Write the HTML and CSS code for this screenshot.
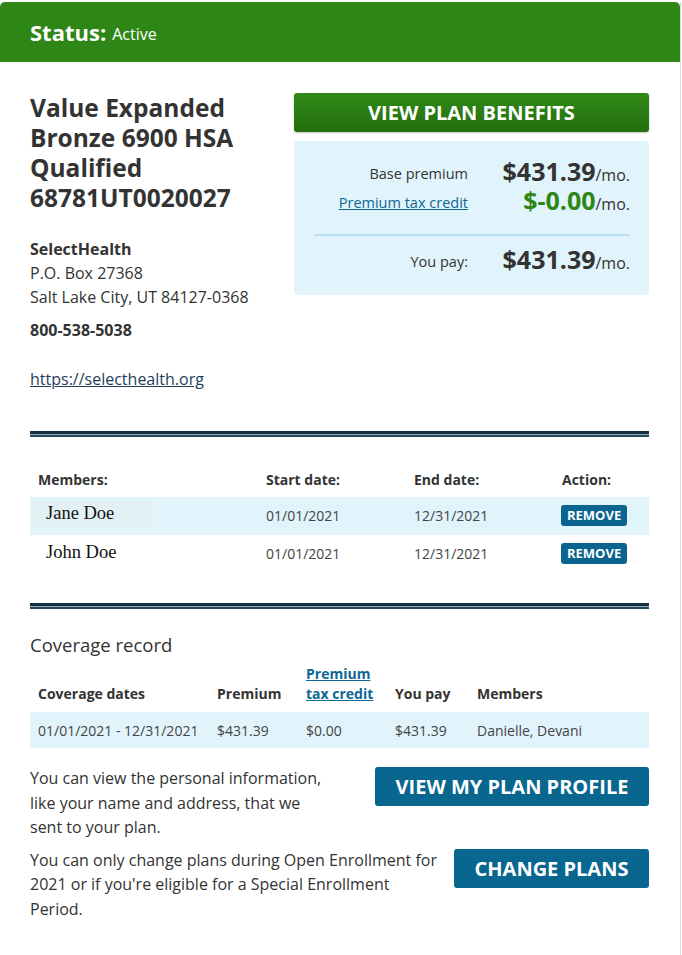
FILE: index.html
```html
<!DOCTYPE html>
<html lang="en">
<head>
<meta charset="utf-8">
<title>Plan status</title>
<link rel="stylesheet" href="styles.css">
</head>
<body>
<div class="card">
  <div class="status-bar"><span class="status-label">Status:</span> <span class="status-value">Active</span></div>
  <div class="content">
    <div class="top">
      <div class="plan-info">
        <h1 class="plan-name">Value Expanded Bronze 6900 HSA Qualified 68781UT0020027</h1>
        <div class="issuer">
          <div class="issuer-name">SelectHealth</div>
          <div>P.O. Box 27368</div>
          <div>Salt Lake City, UT 84127-0368</div>
          <div class="issuer-phone">800-538-5038</div>
          <a class="issuer-link" href="#">https://selecthealth.org</a>
        </div>
      </div>
      <div class="plan-costs">
        <a class="btn btn-green" href="#">VIEW PLAN BENEFITS</a>
        <div class="cost-box">
          <div class="cost-row">
            <span class="cost-label">Base premium</span>
            <span class="cost-value"><b>$431.39</b>/mo.</span>
          </div>
          <div class="cost-row">
            <a class="cost-label link" href="#">Premium tax credit</a>
            <span class="cost-value"><b class="green">$-0.00</b>/mo.</span>
          </div>
          <div class="cost-sep"></div>
          <div class="cost-row">
            <span class="cost-label">You pay:</span>
            <span class="cost-value"><b>$431.39</b>/mo.</span>
          </div>
        </div>
      </div>
    </div>

    <div class="rule"></div>

    <div class="members">
      <div class="m-row m-head">
        <div class="c1">Members:</div>
        <div class="c2">Start date:</div>
        <div class="c3">End date:</div>
        <div class="c4">Action:</div>
      </div>
      <div class="m-row shade">
        <div class="c1"><span class="name name-hl">Jane Doe</span></div>
        <div class="c2">01/01/2021</div>
        <div class="c3">12/31/2021</div>
        <div class="c4"><a class="remove" href="#">REMOVE</a></div>
      </div>
      <div class="m-row">
        <div class="c1"><span class="name">John Doe</span></div>
        <div class="c2">01/01/2021</div>
        <div class="c3">12/31/2021</div>
        <div class="c4"><a class="remove" href="#">REMOVE</a></div>
      </div>
    </div>

    <div class="rule rule-2"></div>

    <h2 class="cov-title">Coverage record</h2>
    <div class="cov">
      <div class="cov-row cov-head">
        <div class="k1">Coverage dates</div>
        <div class="k2">Premium</div>
        <div class="k3"><a class="link" href="#">Premium tax credit</a></div>
        <div class="k4">You pay</div>
        <div class="k5">Members</div>
      </div>
      <div class="cov-row cov-data">
        <div class="k1">01/01/2021 - 12/31/2021</div>
        <div class="k2">$431.39</div>
        <div class="k3">$0.00</div>
        <div class="k4">$431.39</div>
        <div class="k5">Danielle, Devani</div>
      </div>
    </div>

    <div class="action-row">
      <p class="action-text t1">You can view the personal information, like your name and address, that we sent to your plan.</p>
      <a class="btn btn-blue b1" href="#">VIEW MY PLAN PROFILE</a>
    </div>
    <div class="action-row row-2">
      <p class="action-text t2">You can only change plans during Open Enrollment for 2021 or if you're eligible for a Special Enrollment Period.</p>
      <a class="btn btn-blue b2" href="#">CHANGE PLANS</a>
    </div>
  </div>
</div>
</body>
</html>
```

FILE: styles.css
```css
* { box-sizing: border-box; }
html, body { margin: 0; padding: 0; background: #fff; }
body {
  font-family: "Open Sans", "Liberation Sans", sans-serif;
  color: #333;
  font-size: 14px;
}
.card {
  margin-top: 2px;
  width: 681px;
  min-height: 953px;
  border-right: 1px solid #d9d9d9;
  background: #fff;
}
.status-bar {
  height: 60px;
  background: #2e8616;
  border-radius: 5px 5px 0 0;
  color: #fff;
  padding-left: 30px;
  display: flex;
  align-items: center;
  gap: 6px;
}
.status-label { font-size: 22px; font-weight: 700; }
.status-value { font-size: 16px; margin-top: 3px; }

.content { padding: 31px 31px 0 30px; }

.top { display: flex; justify-content: space-between; }
.plan-info { width: 250px; }
.plan-name {
  margin: 0;
  font-size: 24.5px;
  line-height: 30px;
  font-weight: 700;
  color: #333;
}
.issuer { margin-top: 24px; font-size: 16px; line-height: 24px; color: #333; }
.issuer-name { font-weight: 700; }
.issuer-phone { font-weight: 700; margin-top: 9px; }
.issuer-link {
  display: inline-block;
  margin-top: 25px;
  color: #1f3d5c;
  text-decoration: underline;
}

.plan-costs { width: 355px; }
.btn {
  display: flex;
  align-items: center;
  justify-content: center;
  height: 39px;
  color: #fff;
  font-weight: 700;
  font-size: 20px;
  text-decoration: none;
  border-radius: 3px;
}
.btn-green {
  background: linear-gradient(#2f8a16, #256e10);
  box-shadow: 0 1px 2px rgba(0,0,0,0.25);
}
.cost-box {
  margin-top: 9px;
  background: #e1f3fb;
  border-radius: 4px;
  padding: 16px 19px 21px 20px;
}
.cost-row {
  display: grid;
  grid-template-columns: 1fr 128px;
  column-gap: 34px;
  align-items: center;
  height: 29px;
  line-height: 29px;
}
.cost-label { text-align: right; font-size: 14.5px; color: #333; }
.cost-value { text-align: right; font-size: 16px; color: #333; white-space: nowrap; }
.cost-value b { font-size: 25px; font-weight: 700; }
.cost-value b.green { color: #2e8616; }
.link { color: #0d6794; text-decoration: underline; }
.cost-sep {
  height: 2px;
  background: #b6dff2;
  margin: 19px 0 9px;
}

.rule {
  height: 6px;
  margin-top: 40px;
  border-top: 3px solid #142f3f;
  border-bottom: 2px solid #234a5d;
  background: #9aacb5;
}
.members { margin-top: 24px; }
.m-row {
  display: flex;
  align-items: center;
  height: 37.5px;
  color: #444;
}
.m-head { height: 36px; font-weight: 700; color: #333; }
.m-row.shade { background: #e1f3fb; }
.m-row > div { padding-left: 8px; }
.c1 { width: 228px; }
.c2 { width: 148px; }
.c3 { width: 148px; }
.c4 { flex: 1; }
.m-row .c1 { padding-left: 16px; }
.m-row.m-head .c1 { padding-left: 8px; }
.name {
  font-family: "Liberation Serif", "Times New Roman", serif;
  font-size: 18.5px;
  color: #111;
  display: inline-block;
  margin-top: -4px;
}
.name-hl {
  background: #e3f1f4;
  width: 118px;
  margin-left: -12.5px;
  padding: 2px 0 4px 12.5px;
}
.remove {
  display: inline-block;
  background: #09648f;
  color: #fff;
  font-size: 13px;
  font-weight: 700;
  line-height: 21px;
  padding: 0 6px;
  border-radius: 3px;
  text-decoration: none;
  margin-left: -1px;
}

.rule-2 { margin-top: 31px; }
.cov-title {
  margin: 24px 0 0;
  font-size: 18.5px;
  line-height: 24px;
  font-weight: 400;
  color: #333;
}
.cov { margin-top: 7px; }
.cov-row { display: flex; }
.cov-row > div { padding-left: 8px; }
.cov-head {
  align-items: flex-end;
  font-weight: 700;
  line-height: 20px;
  padding-bottom: 8px;
}
.cov-head .link { font-weight: 700; }
.cov-data {
  background: #e1f3fb;
  height: 36px;
  align-items: center;
  color: #444;
}
.k1 { width: 179px; }
.k2 { width: 89px; }
.k3 { width: 89px; }
.k4 { width: 82px; }
.k5 { flex: 1; }

.action-row {
  display: flex;
  justify-content: space-between;
  align-items: flex-start;
  margin-top: 18px;
}
.action-row.row-2 { margin-top: 8px; }
.action-text {
  margin: 0;
  font-size: 16px;
  line-height: 24.5px;
  color: #333;
}
.t1 { width: 305px; }
.t2 { width: 415px; }
.btn-blue { background: #08668f; margin-top: 1px; }
.b1 { width: 274px; }
.b2 { width: 195px; }
```
